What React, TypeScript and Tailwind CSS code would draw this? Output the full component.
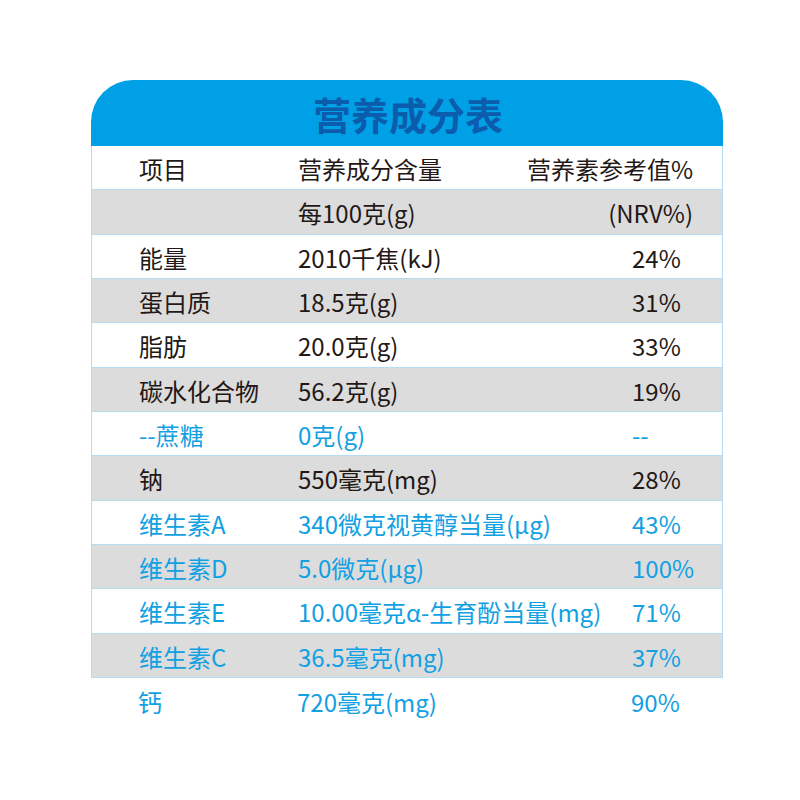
const rows: { name: string; amount: string; nrv: string; blue?: boolean }[] = [
  { name: "能量", amount: "2010千焦(kJ)", nrv: "24%" },
  { name: "蛋白质", amount: "18.5克(g)", nrv: "31%" },
  { name: "脂肪", amount: "20.0克(g)", nrv: "33%" },
  { name: "碳水化合物", amount: "56.2克(g)", nrv: "19%" },
  { name: "--蔗糖", amount: "0克(g)", nrv: "--", blue: true },
  { name: "钠", amount: "550毫克(mg)", nrv: "28%" },
  { name: "维生素A", amount: "340微克视黄醇当量(μg)", nrv: "43%", blue: true },
  { name: "维生素D", amount: "5.0微克(μg)", nrv: "100%", blue: true },
  { name: "维生素E", amount: "10.00毫克α-生育酚当量(mg)", nrv: "71%", blue: true },
  { name: "维生素C", amount: "36.5毫克(mg)", nrv: "37%", blue: true },
];

const last = { name: "钙", amount: "720毫克(mg)", nrv: "90%" };

function Row({
  cells,
  gray,
  blue,
  head,
  border = true,
}: {
  cells: string[];
  gray?: boolean;
  blue?: boolean;
  head?: boolean;
  border?: boolean;
}) {
  return (
    <div
      className={`flex items-center h-[44.33px] pl-[47px] pr-[29px] pt-[3px] text-[24px] leading-none ${
        border ? "border-b border-[#b5dcf1]" : ""
      } ${gray ? "bg-[#dcdcdd]" : "bg-white"} ${
        blue ? "text-[#11a0e2]" : "text-[#231815]"
      }`}
    >
      <span className="w-[159px] shrink-0 whitespace-nowrap">{cells[0]}</span>
      <span className={`whitespace-nowrap ${head ? "flex-1" : "w-[334px] shrink-0"}`}>
        {cells[1]}
      </span>
      <span className={`whitespace-nowrap ${head ? "text-right" : "flex-1"}`}>
        {cells[2]}
      </span>
    </div>
  );
}

export default function App() {
  return (
    <div
      className="w-[800px] h-[800px] bg-white pt-[80px] pl-[91px]"
      style={{ fontFamily: '"Noto Sans CJK SC", "Noto Sans", sans-serif' }}
    >
      <div className="w-[632px]">
        <div className="h-[66px] rounded-t-[42px] bg-[#00a0e6] flex items-center justify-center">
          <h1 className="text-[38px] font-bold text-[#0b5cad] leading-none pt-[2px] pl-[2px]">
            营养成分表
          </h1>
        </div>
        <div className="border-x border-[#b5dcf1]">
          <Row cells={["项目", "营养成分含量", "营养素参考值%"]} head />
          <Row cells={["", "每100克(g)", "(NRV%)"]} gray head />
          {rows.map((r, i) => (
            <Row
              key={r.name}
              cells={[r.name, r.amount, r.nrv]}
              gray={i % 2 === 1}
              blue={r.blue}
            />
          ))}
        </div>
        <Row cells={[last.name, last.amount, last.nrv]} blue border={false} />
      </div>
    </div>
  );
}
